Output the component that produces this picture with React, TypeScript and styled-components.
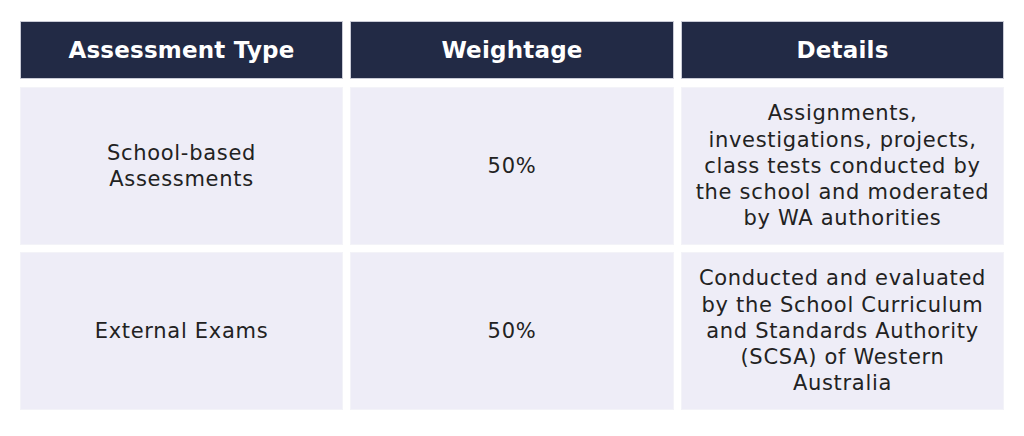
import { Fragment } from "react";
import styled, { createGlobalStyle } from "styled-components";

const GlobalStyle = createGlobalStyle`
  body {
    margin: 0;
    background: #ffffff;
    font-family: "DejaVu Sans", "Noto Sans", sans-serif;
  }
`;

const Table = styled.div`
  display: grid;
  grid-template-columns: 323px 324px 323px;
  column-gap: 7px;
  row-gap: 7px;
  width: 984px;
  padding: 21px 20px 0;
`;

const HeadCell = styled.div`
  display: flex;
  align-items: center;
  justify-content: center;
  height: 58px;
  margin-bottom: 1px;
  box-sizing: border-box;
  background: #222a45;
  border: 1px solid #c9cbd6;
  color: #ffffff;
  font-size: 23px;
  font-weight: 700;
  letter-spacing: 0.2px;
`;

const Cell = styled.div<{ $narrow?: boolean }>`
  display: flex;
  align-items: center;
  justify-content: center;
  box-sizing: border-box;
  height: 158px;
  padding: 0 ${(p) => (p.$narrow ? "70px" : "11px")};
  background: #eeedf7;
  border: 1px solid #f3f3f8;
  color: #222222;
  font-size: 21px;
  line-height: 26.3px;
  letter-spacing: 0.7px;
  text-align: center;
`;

const rows = [
  {
    type: "School-based Assessments",
    weight: "50%",
    details:
      "Assignments, investigations, projects, class tests conducted by the school and moderated by WA authorities",
  },
  {
    type: "External Exams",
    weight: "50%",
    details:
      "Conducted and evaluated by the School Curriculum and Standards Authority (SCSA) of Western Australia",
  },
];

function App() {
  return (
    <>
      <GlobalStyle />
      <Table>
        <HeadCell>Assessment Type</HeadCell>
        <HeadCell>Weightage</HeadCell>
        <HeadCell>Details</HeadCell>
        {rows.map((row) => (
          <Fragment key={row.type}>
            <Cell $narrow>{row.type}</Cell>
            <Cell>{row.weight}</Cell>
            <Cell>{row.details}</Cell>
          </Fragment>
        ))}
      </Table>
    </>
  );
}

export default App;
